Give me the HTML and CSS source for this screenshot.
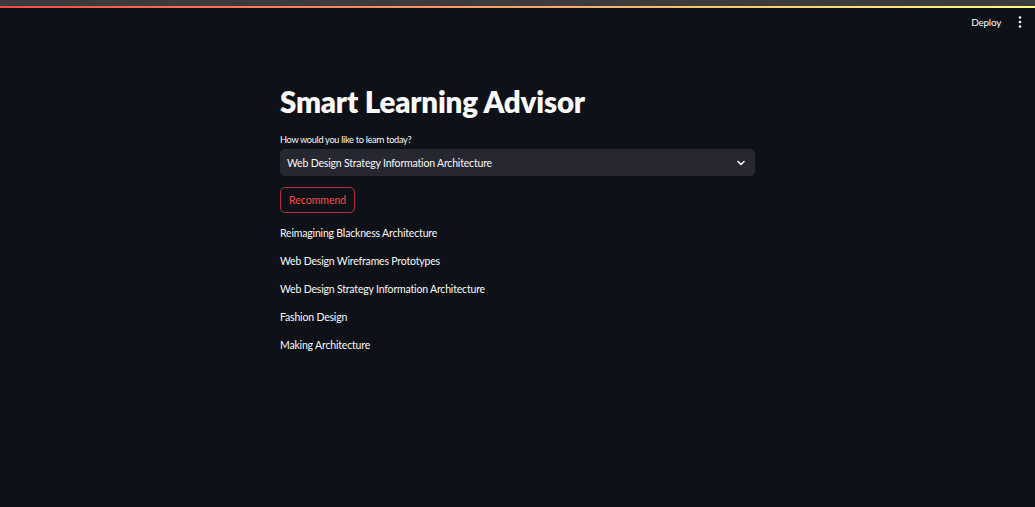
FILE: index.html
```html
<!DOCTYPE html>
<html>
<head>
<meta charset="utf-8">
<link rel="stylesheet" href="styles.css">
</head>
<body>
<div class="topstrip"></div>
<div class="decoration"></div>
<header class="header">
  <span class="deploy">Deploy</span>
  <svg class="kebab" width="4" height="12" viewBox="0 0 4 12"><circle cx="2" cy="1.5" r="1.3" fill="#fafafa"/><circle cx="2" cy="6" r="1.3" fill="#fafafa"/><circle cx="2" cy="10.5" r="1.3" fill="#fafafa"/></svg>
</header>
<main class="main">
  <h1 class="title">Smart Learning Advisor</h1>
  <label class="label">How would you like to learn today?</label>
  <div class="select">
    <span>Web Design Strategy Information Architecture</span>
    <svg class="chev" width="10" height="10" viewBox="0 0 10 10"><path d="M2 3.5 L5 6.5 L8 3.5" stroke="#fafafa" stroke-width="1.6" fill="none" stroke-linecap="round" stroke-linejoin="round"/></svg>
  </div>
  <button class="btn">Recommend</button>
  <ul class="list">
    <li>Reimagining Blackness Architecture</li>
    <li>Web Design Wireframes Prototypes</li>
    <li>Web Design Strategy Information Architecture</li>
    <li>Fashion Design</li>
    <li>Making Architecture</li>
  </ul>
</main>
</body>
</html>
```
FILE: styles.css
```css
* { box-sizing: border-box; }
html, body { margin: 0; padding: 0; }
body {
  background: #0e1117;
  color: #fafafa;
  font-family: "Lato", "Noto Sans", sans-serif;
  width: 1035px;
  height: 507px;
  overflow: hidden;
}
.topstrip { height: 6px; background: #3b3b3d; }
.decoration {
  height: 2px;
  background: linear-gradient(90deg, #ff4b4b, #fffd80);
}
.header {
  display: flex;
  justify-content: flex-end;
  align-items: center;
  height: 28px;
  padding-right: 13px;
  gap: 17px;
}
.deploy { font-size: 10px; color: #fafafa; letter-spacing: -0.3px; }
.kebab { display: block; }
.main {
  width: 475px;
  margin: 0 0 0 280px;
  padding-top: 48px;
}
.title {
  margin: 0;
  font-size: 29.5px;
  font-weight: 800;
  line-height: 36px;
  letter-spacing: -0.2px;
}
.label {
  display: block;
  font-size: 9.2px;
  letter-spacing: -0.3px;
  margin-top: 13px;
  line-height: 14px;
}
.select {
  margin-top: 2px;
  height: 27px;
  background: #262730;
  border-radius: 5px;
  display: flex;
  align-items: center;
  justify-content: space-between;
  padding: 0 9px 0 7px;
  font-size: 10.5px;
  letter-spacing: -0.18px;
}
.chev { display: block; }
.btn {
  margin-top: 11px;
  height: 26px;
  padding: 0 8px;
  background: transparent;
  border: 1px solid #b5313a;
  border-radius: 5px;
  color: #ff4b4b;
  font-family: inherit;
  font-size: 10.5px;
}
.list {
  list-style: none;
  margin: 13px 0 0;
  padding: 0;
  display: flex;
  flex-direction: column;
  gap: 14px;
}
.list li { font-size: 10.5px; line-height: 14px; letter-spacing: -0.18px; }
```
